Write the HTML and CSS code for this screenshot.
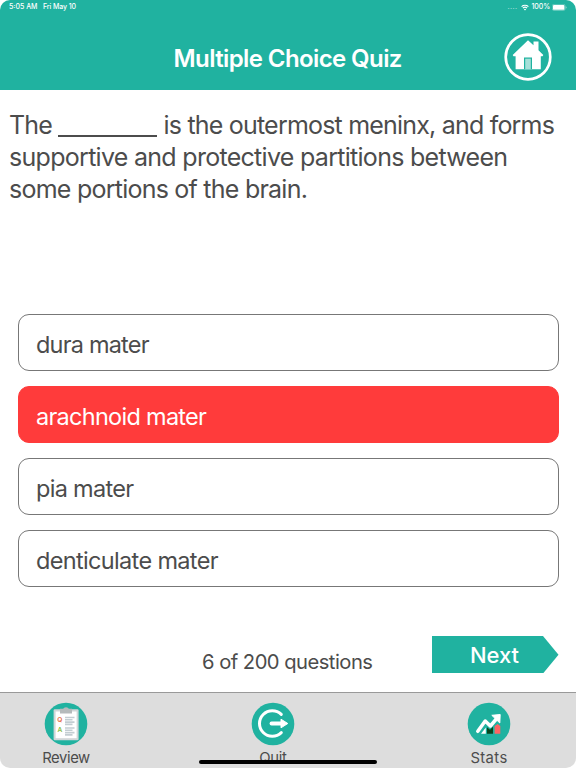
FILE: index.html
```html
<!DOCTYPE html>
<html lang="en">
<head>
<meta charset="utf-8">
<title>Multiple Choice Quiz</title>
<link rel="stylesheet" href="styles.css">
</head>
<body>
<div class="screen">
  <header class="header">
    <div class="status">
      <span class="time">5:05 AM</span><span class="date">Fri May 10</span>
      <span class="signal">....</span>
      <svg class="wifi" viewBox="0 0 8 7"><path d="M.6 2.6a5 5 0 0 1 6.8 0M1.9 4.1a3 3 0 0 1 4.2 0" fill="none" stroke="#fff" stroke-width="1.2"/><path d="M4 6.6 2.8 5.2a1.8 1.8 0 0 1 2.4 0z" fill="#fff"/></svg>
      <span class="percent">100%</span>
      <svg class="battery" viewBox="0 0 15 7"><rect x=".3" y=".3" width="12.8" height="6.2" rx="1.6" fill="none" stroke="#a5ded6" stroke-width=".5"/><rect x="1" y="1" width="11.4" height="4.8" rx=".9" fill="#fff"/><path d="M13.8 2.3v2.2q.8-.3.8-1.1t-.8-1.1" fill="#a5ded6"/></svg>
    </div>
    <div class="titlebar">
      <h1 class="title">Multiple Choice Quiz</h1>
      <svg class="home" viewBox="0 0 48 48"><circle cx="24" cy="24" r="22.3" fill="none" stroke="#fff" stroke-width="2.7"/><path d="M24 7.2 29.5 12.3V8.5h5v8.7l4.8 4.8-.8 1.3H36.8v13H11.6v-13H9.5l-.8-1.3z" fill="#fff"/><path d="M20.6 36.3V25.2h6.8v11.1" fill="#a6e0d9" stroke="#20b2a0" stroke-width="1.2"/></svg>
    </div>
  </header>
  <main class="main">
    <p class="question"><span class="l1">The <span class="blank"></span> is the outermost meninx, and forms</span><span class="l2">supportive and protective partitions between</span><span class="l3">some portions of the brain.</span></p>
    <div class="options">
      <button class="option"><span class="o1">dura mater</span></button>
      <button class="option wrong"><span class="o2">arachnoid mater</span></button>
      <button class="option"><span class="o3">pia mater</span></button>
      <button class="option"><span class="o4">denticulate mater</span></button>
    </div>
    <div class="progress">
      <span class="count">6 of 200 questions</span>
      <button class="next"><span>Next</span></button>
    </div>
  </main>
  <nav class="tabs">
    <a class="tab review">
      <svg viewBox="0 0 44 44"><circle cx="22" cy="22" r="21.3" fill="#20b2a0"/><rect x="9.6" y="7.2" width="25" height="31" rx="1.2" fill="#d1d6d8"/><rect x="11.6" y="9.5" width="21" height="26.7" fill="#fff"/><path d="M16 6.8h3.2q.4-1.5 2.8-1.5t2.8 1.5H28v4.7H16z" fill="#b5babb"/><path d="M21 15.5h9.5M21 17.8h7.5M21 20.1h9.5M21 22.4h7.5M21 26h9.5M21 28.3h7.5M21 30.6h9.5M21 32.9h7.5" stroke="#c3cdd2" stroke-width="1.6"/><text x="13.3" y="19.6" class="qa q">Q</text><text x="13.5" y="29.7" class="qa a">A</text></svg>
      <span>Review</span>
    </a>
    <a class="tab quit">
      <svg viewBox="0 0 44 44"><circle cx="22" cy="22" r="21.3" fill="#20b2a0"/><path d="M30.3 12.4A12.8 12.8 0 1 0 30.3 30.6" fill="none" stroke="#fff" stroke-width="3" stroke-linecap="round"/><path d="M20.5 21.5h12" stroke="#fff" stroke-width="3.8" stroke-linecap="round"/><path d="M30 17.2 36.8 21.5 30 25.8z" fill="#fff" stroke="#fff" stroke-linejoin="round"/></svg>
      <span>Quit</span>
    </a>
    <a class="tab stats">
      <svg viewBox="0 0 44 44"><circle cx="22" cy="22" r="21.3" fill="#20b2a0"/><path d="M14 31.7 18.8 25.5v6.2z" fill="#fff"/><path d="M20 31.7v-6.5l3 2.5 3-3v7z" fill="#06471f"/><path d="M27.6 31.7V24l3-2 2.7 2v7.7z" fill="#ff6464"/><path d="M10.8 29.3 18.2 19l5.2 5L31 15" fill="none" stroke="#fff" stroke-width="3.5" stroke-linecap="round" stroke-linejoin="round"/><path d="M24.8 13.3l8.4-.8-.4 8.5z" fill="#fff" stroke="#fff" stroke-linejoin="round"/></svg>
      <span>Stats</span>
    </a>
    <div class="indicator"></div>
  </nav>
</div>
</body>
</html>
```

FILE: styles.css
```css
* { box-sizing: border-box; }
body { margin: 0; background: #fff; font-family: Inter, "Liberation Sans", sans-serif; color: #4c4c4c; }
button { font: inherit; color: inherit; margin: 0; border: 0; padding: 0; background: none; }
.screen { width: 576px; height: 768px; border-radius: 10px; overflow: hidden; display: flex; flex-direction: column; background: #fff; }
.header { height: 90px; background: #20b2a0; color: #fff; flex: none; }
.status { height: 14px; display: flex; align-items: center; padding: 0 9px; font-size: 7px; line-height: 14px; font-weight: 500; }
.time { width: 34px; white-space: nowrap; }
.date { letter-spacing: -.1px; }
.signal { margin-left: auto; margin-right: 3px; opacity: .6; letter-spacing: .4px; }
.wifi { width: 8px; height: 7px; margin-right: 3px; }
.percent { margin-right: 2px; letter-spacing: -.1px; }
.battery { width: 15px; height: 7px; }
.titlebar { height: 76px; display: grid; grid-template-columns: 1fr 229px 1fr; align-items: center; }
.title { grid-column: 2; margin: 14px 0 0; font-size: 24px; line-height: 30px; font-weight: 600; letter-spacing: -.6px; white-space: nowrap; }
.home { width: 48px; height: 48px; justify-self: end; margin: 10px 24px 0 0; }
.main { height: 602px; flex: none; display: flex; flex-direction: column; }
.question { margin: 0; padding: 19px 9px 0; height: 224px; font-size: 25px; line-height: 32.2px; white-space: nowrap; }
.question > span { display: block; }
.l1 { letter-spacing: -.8px; }
.l2 { letter-spacing: -.71px; }
.l3 { letter-spacing: -.76px; }
.blank { display: inline-block; width: 99px; height: 2px; background: #4c4c4c; vertical-align: -3px; }
.options { display: flex; flex-direction: column; gap: 15px; padding: .3px 17.5px 0; }
.option { height: 57px; border: 1.4px solid #777; border-radius: 11px; text-align: left; padding: 4px 0 0 17.5px; font-size: 23.5px; }
.o1 { letter-spacing: -.8px; }
.o2 { letter-spacing: -.72px; }
.o3 { letter-spacing: -.7px; }
.o4 { letter-spacing: -.66px; }
.wrong { background: #ff3b3b; border-color: #ff3b3b; color: #fff; }
.progress { display: flex; justify-content: flex-end; padding: 48.7px 17.5px 0 0; }
.count { font-size: 20.2px; line-height: 28px; letter-spacing: -.52px; margin-top: 12px; width: 230px; white-space: nowrap; }
.next { width: 126.5px; height: 37.5px; background: #20b2a0; clip-path: polygon(0 0, 111px 0, 100% 50%, 111px 100%, 0 100%); color: #fff; font-size: 22px; font-weight: 500; letter-spacing: -.1px; text-align: left; padding-left: 38px; }
.tabs { flex: 1; background: #ddd; border-top: 1px solid #999; display: flex; position: relative; }
.tab { display: flex; flex-direction: column; align-items: center; width: 80px; padding-top: 9px; font-size: 14.8px; line-height: 20px; white-space: nowrap; }
.tab svg { width: 44px; height: 44px; }
.tab span { margin-top: 2px; }
.review { margin-left: 26px; }
.review span { letter-spacing: -.4px; }
.quit { margin-left: 127px; }
.quit span { letter-spacing: -.3px; height: 16px; overflow: hidden; }
.stats { margin-left: 136px; }
.stats span { letter-spacing: .4px; }
.qa { font-size: 6.6px; font-weight: 600; }
.q { fill: #e5683d; }
.a { fill: #8bbf45; }
.indicator { position: absolute; left: 199px; top: 67px; width: 178px; height: 4px; border-radius: 2px; background: #000; }
```
